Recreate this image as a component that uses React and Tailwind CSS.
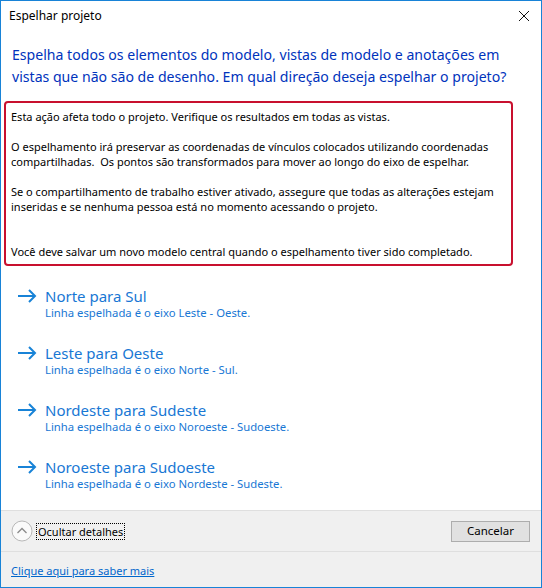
import React from 'react';

const options = [
  { title: 'Norte para Sul', desc: 'Linha espelhada é o eixo Leste - Oeste.' },
  { title: 'Leste para Oeste', desc: 'Linha espelhada é o eixo Norte - Sul.' },
  { title: 'Nordeste para Sudeste', desc: 'Linha espelhada é o eixo Noroeste - Sudoeste.' },
  { title: 'Noroeste para Sudoeste', desc: 'Linha espelhada é o eixo Nordeste - Sudeste.' },
];

const Arrow = () => (
  <svg width="20" height="14" viewBox="0 0 20 14" className="shrink-0">
    <path d="M1 7h17M12 1l6 6-6 6" stroke="#1883d7" strokeWidth="2" fill="none" />
  </svg>
);

const MirrorDialog = () => {
  return (
    <div
      className="w-[542px] h-[588px] border border-[#1883d7] bg-white flex flex-col text-black overflow-hidden"
      style={{ fontFamily: '"Noto Sans", "Open Sans", sans-serif' }}
    >
      {/* Title bar */}
      <div className="h-[30px] flex items-center justify-between pl-[8px] pr-[11px] shrink-0">
        <span className="text-[12px]">Espelhar projeto</span>
        <svg width="12" height="12" viewBox="0 0 12 12">
          <path d="M1 1l10 10M11 1L1 11" stroke="#111" strokeWidth="1" />
        </svg>
      </div>

      {/* Content */}
      <div className="flex-1 min-h-0 flex flex-col">
        <div className="pl-[11px] pt-[13px] text-[14.1px] leading-[22px] text-[#0033bc] whitespace-nowrap">
          Espelha todos os elementos do modelo, vistas de modelo e anotações em
          <br />
          vistas que não são de desenho. Em qual direção deseja espelhar o projeto?
        </div>

        <div className="ml-[3px] mt-[13px] w-[509px] h-[165px] border-2 border-[#c8102e] rounded-[4px] pl-[5px] pt-[6px] text-[11px] leading-[15px] whitespace-nowrap shrink-0">
          <p>Esta ação afeta todo o projeto. Verifique os resultados em todas as vistas.</p>
          <p className="mt-[15px]">
            O espelhamento irá preservar as coordenadas de vínculos colocados utilizando coordenadas
            <br />
            compartilhadas.&nbsp; Os pontos são transformados para mover ao longo do eixo de espelhar.
          </p>
          <p className="mt-[15px]">
            Se o compartilhamento de trabalho estiver ativado, assegure que todas as alterações estejam
            <br />
            inseridas e se nenhuma pessoa está no momento acessando o projeto.
          </p>
          <p className="mt-[30px]">
            Você deve salvar um novo modelo central quando o espelhamento tiver sido completado.
          </p>
        </div>

        <div className="mt-[20px] flex flex-col gap-[23px] pl-[16px]">
          {options.map((o) => (
            <div key={o.title} className="flex items-start gap-[8px]">
              <div className="pt-[3px]">
                <Arrow />
              </div>
              <div className="flex flex-col text-[#1877d4]">
                <span className="text-[15px] leading-[20px]">{o.title}</span>
                <span className="text-[11.3px] leading-[14px]">{o.desc}</span>
              </div>
            </div>
          ))}
        </div>
      </div>

      {/* Footer */}
      <div className="h-[77px] bg-[#f0f0f0] border-t border-[#dfdfdf] flex flex-col shrink-0">
        <div className="h-[41px] flex items-center justify-between pl-[10px] pr-[11px] border-b border-[#dfdfdf]">
          <div className="flex items-center gap-[3px]">
            <svg width="22" height="22" viewBox="0 0 22 22">
              <circle cx="11" cy="11" r="10" fill="#fafafa" stroke="#b8b8b8" strokeWidth="1" />
              <path d="M6.5 13l4.5-4.5 4.5 4.5" stroke="#8a8a8a" strokeWidth="1.3" fill="none" />
            </svg>
            <span className="text-[11px] leading-[15px] px-[1px] border border-dotted border-black">
              Ocultar detalhes
            </span>
          </div>
          <button className="w-[79px] h-[21px] bg-[#e1e1e1] border border-[#adadad] text-[11.5px] leading-none">
            Cancelar
          </button>
        </div>
        <div className="flex-1 flex items-center pl-[10px] pt-[3px]">
          <span className="text-[11px] text-[#0066cc] underline">Clique aqui para saber mais</span>
        </div>
      </div>
    </div>
  );
};

export default function App() {
  return <MirrorDialog />;
}
